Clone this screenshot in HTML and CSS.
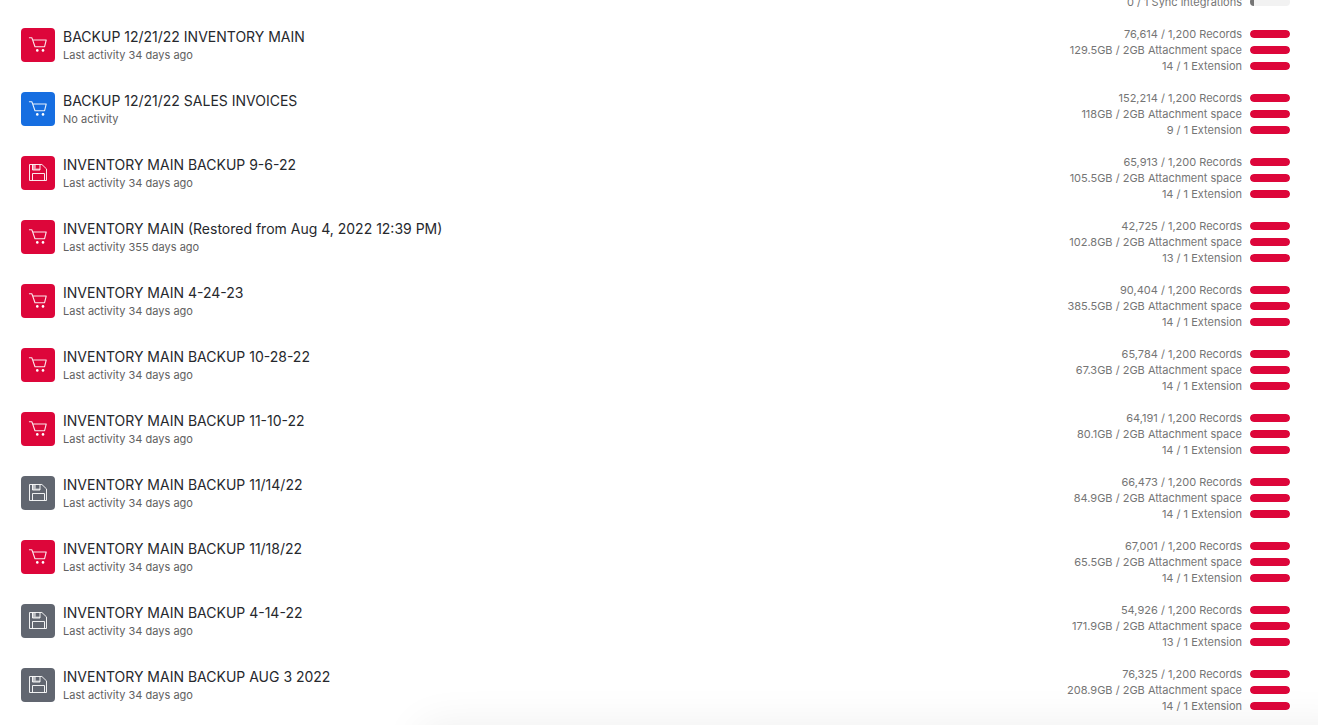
FILE: index.html
```html
<!DOCTYPE html>
<html lang="en">
<head>
<meta charset="utf-8">
<title>Bases</title>
<link rel="stylesheet" href="styles.css">
</head>
<body>
<svg class="sprite" aria-hidden="true">
  <symbol id="cart" viewBox="0 0 34 34">
    <path d="M8.4 9.7h2.4l.8 2.1 2.4 6.9h9.6l1.6-6.7H11.7" fill="none" stroke="#fff" stroke-opacity=".9" stroke-width="1.1" stroke-linejoin="round" stroke-linecap="round"/>
    <circle cx="16.3" cy="22.4" r="1.3" fill="#fff"/>
    <circle cx="22" cy="22.4" r="1.3" fill="#fff"/>
  </symbol>
  <symbol id="disk" viewBox="0 0 34 34">
    <path d="M8.5 8.5h12.4l4.6 4.4v11.6h-17zM11.5 24.5v-7h12v7M11.5 8.5v5.5h7.5V8.5" fill="none" stroke="#fff" stroke-opacity=".9" stroke-width="1"/>
    <path d="M11.5 8.5h3.3v5.5h-3.3zM14.5 12.6h4.5v1.4h-4.5z" fill="#fff" fill-opacity=".6"/>
  </symbol>
</svg>
<main>
<ul class="list">
  <li class="row row-end">
    <ul class="usage"><li>0 / 1 Sync integrations <span class="bar"><span class="fill low"></span></span></li></ul>
  </li>
  <li class="row">
    <svg class="icon red"><use href="#cart"/></svg>
    <div class="info"><h3>BACKUP 12/21/22 INVENTORY MAIN</h3><p>Last activity 34 days ago</p></div>
    <ul class="usage"><li>76,614 / 1,200 Records <span class="bar"><span class="fill"></span></span></li><li>129.5GB / 2GB Attachment space <span class="bar"><span class="fill"></span></span></li><li>14 / 1 Extension <span class="bar"><span class="fill"></span></span></li></ul>
  </li>
  <li class="row">
    <svg class="icon blue"><use href="#cart"/></svg>
    <div class="info"><h3>BACKUP 12/21/22 SALES INVOICES</h3><p>No activity</p></div>
    <ul class="usage"><li>152,214 / 1,200 Records <span class="bar"><span class="fill"></span></span></li><li>118GB / 2GB Attachment space <span class="bar"><span class="fill"></span></span></li><li>9 / 1 Extension <span class="bar"><span class="fill"></span></span></li></ul>
  </li>
  <li class="row">
    <svg class="icon red"><use href="#disk"/></svg>
    <div class="info"><h3>INVENTORY MAIN BACKUP 9-6-22</h3><p>Last activity 34 days ago</p></div>
    <ul class="usage"><li>65,913 / 1,200 Records <span class="bar"><span class="fill"></span></span></li><li>105.5GB / 2GB Attachment space <span class="bar"><span class="fill"></span></span></li><li>14 / 1 Extension <span class="bar"><span class="fill"></span></span></li></ul>
  </li>
  <li class="row">
    <svg class="icon red"><use href="#cart"/></svg>
    <div class="info"><h3>INVENTORY MAIN (Restored from Aug 4, 2022 12:39 PM)</h3><p>Last activity 355 days ago</p></div>
    <ul class="usage"><li>42,725 / 1,200 Records <span class="bar"><span class="fill"></span></span></li><li>102.8GB / 2GB Attachment space <span class="bar"><span class="fill"></span></span></li><li>13 / 1 Extension <span class="bar"><span class="fill"></span></span></li></ul>
  </li>
  <li class="row">
    <svg class="icon red"><use href="#cart"/></svg>
    <div class="info"><h3>INVENTORY MAIN 4-24-23</h3><p>Last activity 34 days ago</p></div>
    <ul class="usage"><li>90,404 / 1,200 Records <span class="bar"><span class="fill"></span></span></li><li>385.5GB / 2GB Attachment space <span class="bar"><span class="fill"></span></span></li><li>14 / 1 Extension <span class="bar"><span class="fill"></span></span></li></ul>
  </li>
  <li class="row">
    <svg class="icon red"><use href="#cart"/></svg>
    <div class="info"><h3>INVENTORY MAIN BACKUP 10-28-22</h3><p>Last activity 34 days ago</p></div>
    <ul class="usage"><li>65,784 / 1,200 Records <span class="bar"><span class="fill"></span></span></li><li>67.3GB / 2GB Attachment space <span class="bar"><span class="fill"></span></span></li><li>14 / 1 Extension <span class="bar"><span class="fill"></span></span></li></ul>
  </li>
  <li class="row">
    <svg class="icon red"><use href="#cart"/></svg>
    <div class="info"><h3>INVENTORY MAIN BACKUP 11-10-22</h3><p>Last activity 34 days ago</p></div>
    <ul class="usage"><li>64,191 / 1,200 Records <span class="bar"><span class="fill"></span></span></li><li>80.1GB / 2GB Attachment space <span class="bar"><span class="fill"></span></span></li><li>14 / 1 Extension <span class="bar"><span class="fill"></span></span></li></ul>
  </li>
  <li class="row">
    <svg class="icon gray"><use href="#disk"/></svg>
    <div class="info"><h3>INVENTORY MAIN BACKUP 11/14/22</h3><p>Last activity 34 days ago</p></div>
    <ul class="usage"><li>66,473 / 1,200 Records <span class="bar"><span class="fill"></span></span></li><li>84.9GB / 2GB Attachment space <span class="bar"><span class="fill"></span></span></li><li>14 / 1 Extension <span class="bar"><span class="fill"></span></span></li></ul>
  </li>
  <li class="row">
    <svg class="icon red"><use href="#cart"/></svg>
    <div class="info"><h3>INVENTORY MAIN BACKUP 11/18/22</h3><p>Last activity 34 days ago</p></div>
    <ul class="usage"><li>67,001 / 1,200 Records <span class="bar"><span class="fill"></span></span></li><li>65.5GB / 2GB Attachment space <span class="bar"><span class="fill"></span></span></li><li>14 / 1 Extension <span class="bar"><span class="fill"></span></span></li></ul>
  </li>
  <li class="row">
    <svg class="icon gray"><use href="#disk"/></svg>
    <div class="info"><h3>INVENTORY MAIN BACKUP 4-14-22</h3><p>Last activity 34 days ago</p></div>
    <ul class="usage"><li>54,926 / 1,200 Records <span class="bar"><span class="fill"></span></span></li><li>171.9GB / 2GB Attachment space <span class="bar"><span class="fill"></span></span></li><li>13 / 1 Extension <span class="bar"><span class="fill"></span></span></li></ul>
  </li>
  <li class="row">
    <svg class="icon gray"><use href="#disk"/></svg>
    <div class="info"><h3>INVENTORY MAIN BACKUP AUG 3 2022</h3><p>Last activity 34 days ago</p></div>
    <ul class="usage"><li>76,325 / 1,200 Records <span class="bar"><span class="fill"></span></span></li><li>208.9GB / 2GB Attachment space <span class="bar"><span class="fill"></span></span></li><li>14 / 1 Extension <span class="bar"><span class="fill"></span></span></li></ul>
  </li>
</ul>
</main>
<div class="drawer-shadow"></div>
</body>
</html>
```
FILE: styles.css
```css
* {
  box-sizing: border-box;
}

body {
  margin: 0;
  overflow: hidden;
  background: #fff;
  color: #26282d;
  font-family: Inter, "Liberation Sans", sans-serif;
}

ul,
h3,
p {
  margin: 0;
  padding: 0;
  list-style: none;
  font-weight: 400;
}

.sprite {
  display: none;
}

/* The list is scrolled so that the first row is cut by the top edge. */
.list {
  margin-top: -14px;
  padding: 0 28px 0 21px;
}

.row {
  display: flex;
  align-items: flex-start;
  gap: 8px;
  padding: 8px 0;
}

.row-end {
  justify-content: flex-end;
}

.icon {
  flex: none;
  width: 34px;
  height: 34px;
  margin-top: 2px;
  border-radius: 4px;
}

.red {
  background: #dd063a;
}

.blue {
  background: #166ee1;
}

.gray {
  background: #616670;
}

.info {
  flex: 1;
  padding-top: 2px;
}

.info h3 {
  font-size: 14px;
  line-height: 18px;
}

.info p {
  color: #616161;
  font-size: 11px;
  line-height: 18px;
}

.usage li {
  display: flex;
  align-items: center;
  justify-content: flex-end;
  gap: 8px;
  color: #757575;
  font-size: 11px;
  line-height: 16px;
}

.bar {
  width: 40px;
  height: 8px;
  overflow: hidden;
  border-radius: 4px;
  background: #f2f2f2;
}

.fill {
  display: block;
  height: 100%;
  border-radius: 4px;
  background: #dd063a;
}

.low {
  width: 10%;
  border-radius: 0;
  background: #757575;
}

.drawer-shadow {
  position: fixed;
  top: 100%;
  left: 420px;
  right: -40px;
  height: 80px;
  border-radius: 12px;
  box-shadow: 0 0 44px rgba(0, 0, 0, 0.07);
}
```
